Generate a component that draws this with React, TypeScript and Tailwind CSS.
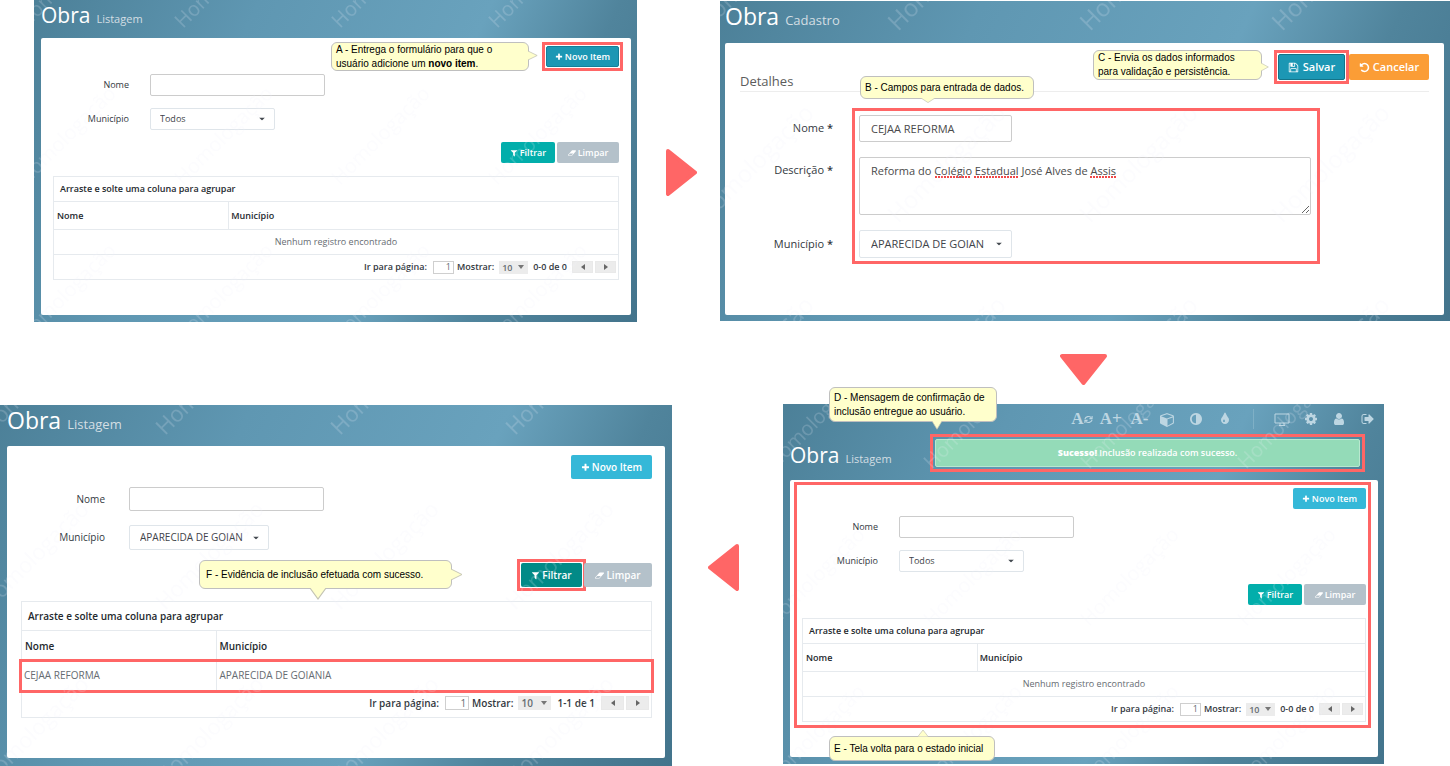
import { useState, type ReactNode } from "react";

const ICONS = {
  plus: "M1600 736v192q0 40-28 68t-68 28h-416v416q0 40-28 68t-68 28h-192q-40 0-68-28t-28-68v-416h-416q-40 0-68-28t-28-68v-192q0-40 28-68t68-28h416v-416q0-40 28-68t68-28h192q40 0 68 28t28 68v416h416q40 0 68 28t28 68z",
  filter:
    "M1595 295q17 41-14 70l-493 493v742q0 42-39 59-13 5-25 5-27 0-45-19l-256-256q-19-19-19-45v-486l-493-493q-31-29-14-70 17-39 59-39h1280q42 0 59 39z",
  eraser:
    "M832 1408l336-384h-768l-336 384h768zm1013-1077q15 34 9.5 71.5t-30.5 65.5l-896 1024q-38 44-96 44h-768q-38 0-69.5-20.5t-47.5-54.5q-15-34-9.5-71.5t30.5-65.5l896-1024q38-44 96-44h768q38 0 69.5 20.5t47.5 54.5z",
  save: "M512 1536h768v-384h-768v384zm896 0h128v-896q0-14-10-38.5t-20-34.5l-281-281q-10-10-34-20t-39-10v416q0 40-28 68t-68 28h-576q-40 0-68-28t-28-68v-416h-128v1280h128v-416q0-40 28-68t68-28h832q40 0 68 28t28 68v416zm-384-928v-320q0-13-9.5-22.5t-22.5-9.5h-192q-13 0-22.5 9.5t-9.5 22.5v320q0 13 9.5 22.5t22.5 9.5h192q13 0 22.5-9.5t9.5-22.5zm640 32v928q0 40-28 68t-68 28h-1344q-40 0-68-28t-28-68v-1344q0-40 28-68t68-28h928q40 0 88 20t76 48l280 280q28 28 48 76t20 88z",
  undo: "M1664 896q0 156-61 298t-164 245-245 164-298 61q-172 0-327-72.5t-264-204.5q-7-10-6.5-22.5t8.5-20.5l137-138q10-9 25-9 16 2 23 12 73 95 179 147t225 52q104 0 198.5-40.5t163.5-109.5 109.5-163.5 40.5-198.5-40.5-198.5-109.5-163.5-163.5-109.5-198.5-40.5q-98 0-188 35.5t-160 101.5l137 138q31 30 14 69-17 40-59 40h-448q-26 0-45-19t-19-45v-448q0-42 40-59 39-17 69 14l130 129q107-101 244.5-156.5t284.5-55.5q156 0 298 61t245 164 164 245 61 298z",
  cube: "M896 1629l640-349v-636l-640 233v752zm-64-865l698-254-698-254-698 254zm832-252v768q0 35-18 65t-49 47l-704 384q-28 16-61 16t-61-16l-704-384q-31-17-49-47t-18-65v-768q0-40 23-73t61-47l704-256q22-8 44-8t44 8l704 256q38 14 61 47t23 73z",
  adjust:
    "M896 1440v-1088q-148 0-273 73t-198 198-73 273 73 273 198 198 273 73zm768-544q0 209-103 385.5t-279.5 279.5-385.5 103-385.5-103-279.5-279.5-103-385.5 103-385.5 279.5-279.5 385.5-103 385.5 103 279.5 279.5 103 385.5z",
  tint: "M896 1152q0-36-20-69-1-1-15.5-22.5t-25.5-38-25-44-21-50.5q-4-16-21-16t-21 16q-7 23-21 50.5t-25 44-25.5 38-15.5 22.5q-20 33-20 69 0 53 37.5 90.5t90.5 37.5 90.5-37.5 37.5-90.5zm512-128q0 212-150 362t-362 150-362-150-150-362q0-145 81-275 6-9 62.5-90.5t101-151 99.5-178 83-201.5q9-30 34-47t51-17 51.5 17 33.5 47q28 93 83 201.5t99.5 178 101 151 62.5 90.5q81 127 81 275z",
  cog: "M1152 896q0-106-75-181t-181-75-181 75-75 181 75 181 181 75 181-75 75-181zm512-109v222q0 12-8 23t-20 13l-185 28q-19 54-39 91 35 50 107 138 10 12 10 25t-9 23q-27 37-99 108t-94 71q-12 0-26-9l-138-108q-44 23-91 38-16 136-29 186-7 28-36 28h-222q-14 0-24.5-8.5t-11.5-21.5l-28-184q-49-16-90-37l-141 107q-10 9-25 9-14 0-25-11-126-114-165-168-7-10-7-23 0-12 8-23 15-21 51-66.5t54-70.5q-27-50-41-99l-183-27q-13-2-21-12.5t-8-23.5v-222q0-12 8-23t19-13l186-28q14-46 39-92-40-57-107-138-10-12-10-24 0-10 9-23 26-36 98.5-107.5t94.5-71.5q13 0 26 10l138 107q44-23 91-38 16-136 29-186 7-28 36-28h222q14 0 24.5 8.5t11.5 21.5l28 184q49 16 90 37l142-107q9-9 24-9 13 0 25 10 129 119 165 170 7 8 7 22 0 12-8 23-15 21-51 66.5t-54 70.5q26 50 41 98l183 28q13 2 21 12.5t8 23.5z",
  user: "M1536 1399q0 109-62.5 187t-150.5 78h-854q-88 0-150.5-78t-62.5-187q0-85 8.5-160.5t31.5-152 58.5-131 94-89 134.5-34.5q131 128 313 128t313-128q76 0 134.5 34.5t94 89 58.5 131 31.5 152 8.5 160.5zm-256-887q0 159-112.5 271.5t-271.5 112.5-271.5-112.5-112.5-271.5 112.5-271.5 271.5-112.5 271.5 112.5 112.5 271.5z",
  signOut:
    "M704 1440q0 4 1 20t.5 26.5-3 23.5-10 19.5-20.5 6.5h-320q-119 0-203.5-84.5t-84.5-203.5v-704q0-119 84.5-203.5t203.5-84.5h320q13 0 22.5 9.5t9.5 22.5q0 4 1 20t.5 26.5-3 23.5-10 19.5-20.5 6.5h-320q-66 0-113 47t-47 113v704q0 66 47 113t113 47h312l11.5 1 11.5 3 8 5.5 7 9 2 13.5zm928-544q0 26-19 45l-544 544q-19 19-45 19t-45-19-19-45v-288h-448q-26 0-45-19t-19-45v-384q0-26 19-45t45-19h448v-288q0-26 19-45t45-19 45 19l544 544q19 19 19 45z",
};

function Icon({ name, className }: { name: keyof typeof ICONS; className: string }) {
  return (
    <svg viewBox={name === "eraser" ? "-64 0 1920 1792" : "0 0 1792 1792"} className={className} fill="currentColor" aria-hidden="true">
      <path d={ICONS[name]} />
    </svg>
  );
}

/* Diagonal stamp that the test environment lays over every screen. */
function Watermark({ id, tile, x, y, size }: { id: string; tile: number; x: number; y: number; size: number }) {
  return (
    <svg className="pointer-events-none absolute inset-0 size-full" aria-hidden="true">
      <defs>
        <pattern id={id} patternUnits="userSpaceOnUse" x={x - 30} y={y - tile + 10} width={tile} height={tile}>
          <text
            transform={`translate(30 ${tile - 10}) rotate(-45)`}
            fontSize={size}
            fontFamily="Open Sans, sans-serif"
            fill="#edeef5"
            fillOpacity="0.19"
          >
            Homologação
          </text>
        </pattern>
      </defs>
      <rect width="100%" height="100%" fill={`url(#${id})`} />
    </svg>
  );
}

function Screen({ children, className = "" }: { children: ReactNode; className?: string }) {
  return (
    <section
      className={`relative flex flex-col bg-[linear-gradient(115deg,#4c8098_0%,#5f97b2_30%,#69a2bd_61%,#50849c_78%,#43748c_100%)] font-['Open_Sans',sans-serif] ${className}`}
    >
      {children}
    </section>
  );
}

function Pointer({ dir, className }: { dir: "right" | "down" | "up"; className: string }) {
  const d = { right: "M0 0L11 6L0 12", down: "M0 0L7 11L14 0", up: "M0 11L6 0L12 11" }[dir];
  const box = { right: "0 0 12 12", down: "0 0 14 12", up: "0 0 12 12" }[dir];
  return (
    <svg viewBox={box} preserveAspectRatio="none" className={`absolute ${className}`} aria-hidden="true">
      <path d={d} fill="#ffffcc" stroke="#c4c4b4" />
    </svg>
  );
}

function Callout({ children, className }: { children: ReactNode; className: string }) {
  return (
    <div
      className={`absolute z-10 flex items-center rounded-md border border-[#bfbfbf] bg-[#ffffcc] pl-1 font-['Liberation_Sans',sans-serif] text-[10px] leading-[14px] whitespace-nowrap text-black ${className}`}
    >
      {children}
    </div>
  );
}

/* Square frame drawn round a control without moving its neighbours. */
function Framed({ on = true, children }: { on?: boolean; children: ReactNode }) {
  return <span className={on ? "-m-1 flex border-3 border-[#ff6666] p-px" : "flex"}>{children}</span>;
}

function SelectBox({
  id,
  options,
  className,
  text,
}: {
  id: string;
  options: string[];
  className: string;
  text: string;
}) {
  return (
    <span className={`relative block ${className}`}>
      <select
        id={id}
        className={`size-full appearance-none overflow-hidden rounded-[2px] border border-[#dfe5ea] bg-white text-[#3f444a] ${text}`}
      >
        {options.map((o) => (
          <option key={o}>{o}</option>
        ))}
      </select>
      <svg viewBox="0 0 6 3" className="pointer-events-none absolute top-1/2 right-2.5 h-[3px] w-1.5 -translate-y-1/2" aria-hidden="true">
        <path d="M0 0h6L3 3z" fill="#444a50" />
      </svg>
    </span>
  );
}

const SIZES = {
  sm: {
    text: "text-[9px]",
    panel: "px-3 pt-2 pb-[35px]",
    actions: "h-[21px]",
    button: "h-[21px] text-[9px]",
    novo: "w-[73px]",
    filtrar: "w-[54px]",
    limpar: "w-[62px]",
    icon: "size-2",
    fields: "mt-[7px] gap-3",
    label: "w-[76px]",
    input: "h-[22px] w-[175px]",
    select: "h-[22px] w-[125px]",
    selectText: "pl-[9px] text-[9px]",
    gap: "gap-[21px]",
    buttons: "mt-3 mb-[13px]",
    group: "h-6 pl-1.5",
    head: "h-[28px]",
    row: "h-[25px]",
    pager: "h-6",
    pageInput: "h-[13px] w-[21px] mr-[3px] ml-[6px]",
    pageSelect: "h-[13px] w-[29px]",
    range: "mx-[5px]",
    pageButton: "h-[12px] w-[21px]",
  },
  lg: {
    text: "text-[10px]",
    panel: "pl-3.5 pr-[13px] pt-[9px] pb-10",
    actions: "h-6",
    button: "h-6 text-[10px]",
    novo: "w-[81px]",
    filtrar: "w-[61px]",
    limpar: "w-[68px]",
    icon: "size-[9px]",
    fields: "mt-2 gap-3.5",
    label: "w-[84px]",
    input: "h-6 w-[195px]",
    select: "h-[25px] w-[140px]",
    selectText: "pl-2.5 text-[10px]",
    gap: "gap-6",
    buttons: "mt-[13px] mb-[14px]",
    group: "h-[28px] pl-1.5",
    head: "h-[31px]",
    row: "h-[28px]",
    pager: "h-[27px]",
    pageInput: "h-[14px] w-6 mr-[3px] ml-[6px]",
    pageSelect: "h-[14px] w-[33px]",
    range: "mx-1.5",
    pageButton: "h-[14px] w-[23px]",
  },
};

type ListProps = {
  id: string;
  size: keyof typeof SIZES;
  city: string;
  rows: [string, string][];
  range: string;
  active?: "novo" | "filtrar";
};

function ListPanel({ id, size, city, rows, range, active }: ListProps) {
  const s = SIZES[size];
  const btn = `flex items-center justify-center gap-0.5 rounded-[2px] font-semibold text-white ${s.button}`;
  return (
    <div className={`rounded-[2px] bg-white ${s.panel} ${s.text} text-[#32383e]`}>
      <div className={`flex justify-end ${s.actions}`}>
        <Framed on={active === "novo"}>
          <button
            type="button"
            className={`${btn} ${s.novo} ${active === "novo" ? "border border-[#147f99] bg-[#1c97b4]" : "bg-[#35b8d8]"}`}
          >
            <Icon name="plus" className={s.icon} />
            Novo Item
          </button>
        </Framed>
      </div>
      <form onSubmit={(e) => e.preventDefault()}>
        <div className={`flex flex-col ${s.fields}`}>
          <div className={`flex items-center ${s.gap}`}>
            <label htmlFor={`${id}-nome`} className={`text-right ${s.label}`}>
              Nome
            </label>
            <input id={`${id}-nome`} className={`rounded-[2px] border border-[#cccccc] bg-white px-2 ${s.input}`} />
          </div>
          <div className={`flex items-center ${s.gap}`}>
            <label htmlFor={`${id}-municipio`} className={`text-right ${s.label}`}>
              Município
            </label>
            <SelectBox id={`${id}-municipio`} options={[city]} className={s.select} text={s.selectText} />
          </div>
        </div>
        <div className={`flex justify-end gap-0.5 ${s.buttons}`}>
          <Framed on={active === "filtrar"}>
            <button type="submit" className={`${btn} ${s.filtrar} ${active === "filtrar" ? "bg-[#028a87]" : "bg-[#02aeab]"}`}>
              <Icon name="filter" className={s.icon} />
              Filtrar
            </button>
          </Framed>
          <button type="reset" className={`${btn} ${s.limpar} bg-[#b4c1ca]`}>
            <Icon name="eraser" className={s.icon} />
            Limpar
          </button>
        </div>
      </form>
      <div className="border border-[#e6eaee]">
        <div className={`flex items-center font-semibold text-[#24292e] ${s.group}`}>Arraste e solte uma coluna para agrupar</div>
        <table className="w-full table-fixed border-collapse">
          <thead>
            <tr className={`border-y border-[#e6eaee] text-left text-[#24292e] ${s.head}`}>
              <th className="w-[31%] border-r border-[#e6eaee] px-[3px] font-semibold">Nome</th>
              <th className="px-[2px] font-semibold">Município</th>
            </tr>
          </thead>
          <tbody>
            {rows.length === 0 && (
              <tr className={`border-b border-[#e6eaee] ${s.row}`}>
                <td colSpan={2} className="text-center text-[#666c72]">
                  Nenhum registro encontrado
                </td>
              </tr>
            )}
            {rows.map(([nome, municipio]) => (
              <tr key={nome} className={`text-[#666c72] outline-3 outline-[#ff6666] ${s.row}`}>
                <td className="border-r border-[#e6eaee] px-[2px]">{nome}</td>
                <td className="px-[2px]">{municipio}</td>
              </tr>
            ))}
          </tbody>
        </table>
        <div className={`flex items-center justify-end pr-0.5 font-semibold text-[#32383e] ${s.pager}`}>
          <label htmlFor={`${id}-pagina`}>Ir para página:</label>
          <input
            id={`${id}-pagina`}
            defaultValue="1"
            className={`border border-[#cfcfcf] bg-white pr-0.5 text-right font-normal text-[#666c72] ${s.pageInput}`}
          />
          <label htmlFor={`${id}-mostrar`}>Mostrar:</label>
          <span className={`relative ml-[5px] ${s.pageSelect}`}>
            <select id={`${id}-mostrar`} className="block size-full appearance-none bg-[#ececec] pl-[3px] text-[#666c72]">
              <option>10</option>
            </select>
            <svg viewBox="0 0 6 4" className="pointer-events-none absolute top-1/2 right-1 h-1 w-1.5 -translate-y-1/2" aria-hidden="true">
              <path d="M0 0h6L3 4z" fill="#777" />
            </svg>
          </span>
          <span className={s.range}>{range}</span>
          <button type="button" aria-label="Anterior" className={`flex items-center justify-center border border-[#e9e9e9] bg-[#ececec] ${s.pageButton}`}>
            <svg viewBox="0 0 4 6" className="h-1.5 w-1" aria-hidden="true">
              <path d="M4 0v6L0 3z" fill="#666" />
            </svg>
          </button>
          <button type="button" aria-label="Próxima" className={`ml-0.5 flex items-center justify-center border border-[#e9e9e9] bg-[#ececec] ${s.pageButton}`}>
            <svg viewBox="0 0 4 6" className="h-1.5 w-1" aria-hidden="true">
              <path d="M0 0v6L4 3z" fill="#666" />
            </svg>
          </button>
        </div>
      </div>
    </div>
  );
}

function FlowArrow({ dir, className = "" }: { dir: "right" | "down" | "left"; className?: string }) {
  const path = {
    right: "M2 2L29 23.500L2 45z",
    left: "M29 2L2 23.500L29 45z",
    down: "M2 2H45L23.500 29z",
  }[dir];
  return (
    <svg
      viewBox={dir === "down" ? "0 0 47 31" : "0 0 31 47"}
      className={`${dir === "down" ? "h-[31px] w-[47px]" : "h-[47px] w-[31px]"} ${className}`}
      aria-hidden="true"
    >
      <path d={path} fill="#ff6666" stroke="#ff6666" strokeWidth="4" strokeLinejoin="round" />
    </svg>
  );
}

function Title({ sub, className, subClass }: { sub: string; className: string; subClass: string }) {
  return (
    <h1 className={`flex items-baseline gap-1.5 font-normal text-white ${className}`}>
      Obra <small className={`font-medium text-[#d3dee3] ${subClass}`}>{sub}</small>
    </h1>
  );
}

function FormPanel() {
  const [nome, setNome] = useState("CEJAA REFORMA");
  const label = "w-[93px] shrink-0 text-right";
  const star = <span className="font-semibold">*</span>;
  return (
    <form onSubmit={(e) => e.preventDefault()} className="rounded-[2px] bg-white px-[15px] pt-[11px] pb-[57px] text-[11px] text-[#32383e]">
      <div className="flex h-[38px] items-start justify-between border-b border-[#ededed]">
        <h2 className="pt-[18px] text-[13px] leading-[18px] text-[#5c5c5c]">Detalhes</h2>
        <div className="flex gap-1">
          <Framed>
            <button
              type="submit"
              className="flex h-[26px] w-[67px] items-center justify-center gap-1 rounded-[2px] border border-[#147489] bg-[#1c97b4] font-semibold text-white"
            >
              <Icon name="save" className="size-[11px]" />
              Salvar
            </button>
          </Framed>
          <button type="button" className="flex h-[26px] w-[80px] items-center justify-center gap-[3px] rounded-[2px] bg-[#fb9d36] font-semibold text-white">
            <Icon name="undo" className="size-[11px]" />
            Cancelar
          </button>
        </div>
      </div>
      <div className="mt-[23px] flex flex-col gap-[15px]">
        <div className="flex items-center gap-[26px]">
          <label htmlFor="cad-nome" className={label}>
            Nome {star}
          </label>
          <input
            id="cad-nome"
            value={nome}
            onChange={(e) => setNome(e.target.value)}
            className="h-[27px] w-[153px] rounded-[2px] border border-[#cccccc] bg-white px-[11px] text-[#4a4a4a]"
          />
        </div>
        <div className="flex items-start gap-[26px]">
          <label htmlFor="cad-descricao" className={`pt-[5px] ${label}`}>
            Descrição {star}
          </label>
          <div className="relative mr-[118px] flex-1">
            <textarea
              id="cad-descricao"
              spellCheck={false}
              defaultValue="Reforma do Colégio Estadual José Alves de Assis"
              className="block h-[58px] w-full rounded-[2px] border border-[#cccccc] bg-white px-[11px] pt-[5px] leading-[16px] text-[#4a4a4a]"
            />
            <svg viewBox="0 0 270 24" className="pointer-events-none absolute top-0 left-0 h-6 w-[270px]" aria-hidden="true">
              <path d="M76 20H111M115 20H160M231 20H258" stroke="#f04848" strokeWidth="2" strokeDasharray="2 1" />
            </svg>
          </div>
        </div>
        <div className="flex items-center gap-[26px]">
          <label htmlFor="cad-municipio" className={label}>
            Município {star}
          </label>
          <SelectBox id="cad-municipio" options={["APARECIDA DE GOIAN"]} className="h-[28px] w-[153px]" text="pl-[11px] text-[11px]" />
        </div>
      </div>
    </form>
  );
}

function Toolbar() {
  const item = "flex h-full flex-1 items-center justify-center font-['Liberation_Serif',serif] text-[17px] font-bold";
  return (
    <nav aria-label="Acessibilidade" className="-mr-1 ml-auto flex h-[30px] w-[314px] text-[#bdd6e2]">
      <button type="button" aria-label="Fonte padrão" className={`${item} gap-px`}>
        A
        <svg viewBox="0 0 10 10" className="size-[9px]" fill="none" stroke="currentColor" strokeWidth="1.200" aria-hidden="true">
          <path d="M1 4.500A4 3.500 0 0 1 8 3M9 5.500A4 3.500 0 0 1 2 7M9 1v3H6M1 9V6h3" />
        </svg>
      </button>
      <button type="button" className={item}>A+</button>
      <button type="button" className={item}>A-</button>
      <button type="button" aria-label="Tema" className={item}><Icon name="cube" className="size-[15px]" /></button>
      <button type="button" aria-label="Contraste" className={item}><Icon name="adjust" className="size-[14px]" /></button>
      <button type="button" aria-label="Cor" className={item}><Icon name="tint" className="size-[14px]" /></button>
      <span className={item}><span className="h-5 w-px bg-[#7fb0c6]" /></span>
      <button type="button" aria-label="Tela" className={item}>
        <svg viewBox="0 0 16 13" className="h-[13px] w-4" fill="none" stroke="currentColor" aria-hidden="true">
          <path d="M1 1h14v9H1zM5 12.500h6M6 10v2M10 10v2" />
        </svg>
      </button>
      <button type="button" aria-label="Configurações" className={item}><Icon name="cog" className="size-[14px]" /></button>
      <button type="button" aria-label="Usuário" className={item}><Icon name="user" className="size-[14px]" /></button>
      <button type="button" aria-label="Sair" className={item}><Icon name="signOut" className="size-[14px]" /></button>
    </nav>
  );
}

export default function App() {
  return (
    <main className="overflow-x-clip bg-white">
      <div className="grid grid-cols-[34fr_603fr_83fr_730fr] items-start">
        <Screen className="col-start-2 pr-[6px] pb-[7px] pl-[7px]">
          <Title sub="Listagem" className="h-[38px] text-[21px] leading-[30px]" subClass="text-[11px]" />
          <ListPanel id="lista-a" size="sm" city="Todos" rows={[]} range="0-0 de 0" active="novo" />
          <Watermark id="wm-a" tile={157} x={149} y={29} size={20} />
          <Callout className="top-[42px] right-[108px] h-[29px] w-[198px]">
            <p>
              A - Entrega o formulário para que o
              <br />
              usuário adicione um <b>novo item</b>.
            </p>
            <Pointer dir="right" className="top-2 -right-2.5 h-[9px] w-2.5" />
          </Callout>
        </Screen>
        <FlowArrow dir="right" className="mt-[149px] ml-[29px]" />
        <Screen className="mt-px pr-[6px] pb-[6px] pl-[5px]">
          <Title sub="Cadastro" className="h-[42px] text-[23px] leading-[30px]" subClass="text-[13px]" />
          <FormPanel />
          <Watermark id="wm-b" tile={192} x={178} y={31} size={24} />
          <span className="pointer-events-none absolute top-[107px] right-[130px] left-[132px] h-[156px] border-3 border-[#ff6666]" />
          <Callout className="top-[75px] left-[140px] h-[23px] w-[174px]">
            B - Campos para entrada de dados.
            <Pointer dir="down" className="-bottom-[5px] left-[60px] h-[5px] w-3.5" />
          </Callout>
          <Callout className="top-[49px] right-[188px] h-[30px] w-[169px]">
            <p>
              C - Envia os dados informados
              <br />
              para validação e persistência.
            </p>
            <Pointer dir="right" className="top-3 -right-2 h-2 w-2" />
          </Callout>
        </Screen>
      </div>

      <div className="grid grid-cols-[716fr_734fr] pt-8 pb-[19px]">
        <FlowArrow dir="down" className="col-start-2 justify-self-center" />
      </div>

      <div className="grid grid-cols-[672fr_111fr_601fr_66fr] items-start">
        <Screen className="mt-px px-[7px] pb-2">
          <Title sub="Listagem" className="h-[41px] text-[23px] leading-[30px]" subClass="text-[13px]" />
          <ListPanel
            id="lista-f"
            size="lg"
            city="APARECIDA DE GOIAN"
            rows={[["CEJAA REFORMA", "APARECIDA DE GOIANIA"]]}
            range="1-1 de 1"
            active="filtrar"
          />
          <Watermark id="wm-f" tile={175} x={165} y={31} size={22} />
          <Callout className="top-[155px] left-[199px] h-[29px] w-[253px] pl-1.5">
            F - Evidência de inclusão efetuada com sucesso.
            <Pointer dir="right" className="top-2 -right-3 h-[11px] w-3" />
            <Pointer dir="down" className="-bottom-3 left-[110px] h-3 w-4" />
          </Callout>
        </Screen>
        <FlowArrow dir="left" className="mt-[140px] ml-9" />
        <Screen className="pr-[6px] pb-[7px] pl-[7px]">
          <Toolbar />
          <div className="flex h-[46px] items-start">
            <Title sub="Listagem" className="w-[140px] pt-1.5 text-[21px] leading-[30px]" subClass="text-[11px]" />
            <div className="mr-[13px] h-[38px] flex-1 border-3 border-[#ff6666] p-0.5">
              <div
                role="status"
                className="flex h-7 items-center justify-center rounded-[2px] border border-[#b9e8cf] bg-[#94dbb8] text-[9px] font-semibold text-white"
              >
                <p>
                  <b className="font-extrabold">Sucesso!</b> Inclusão realizada com sucesso.
                </p>
              </div>
            </div>
          </div>
          <ListPanel id="lista-d" size="sm" city="Todos" rows={[]} range="0-0 de 0" />
          <Watermark id="wm-d" tile={157} x={149} y={66} size={20} />
          <span className="pointer-events-none absolute top-[78px] right-[13px] bottom-9 left-[11px] border-3 border-[#ff6666]" />
          <Callout className="-top-[17px] left-[46px] h-[35px] w-[168px]">
            <p>
              D - Mensagem de confirmação de
              <br />
              inclusão entregue ao usuário.
            </p>
            <Pointer dir="down" className="-bottom-[9px] left-[102px] h-[9px] w-2.5" />
          </Callout>
          <Callout className="bottom-[3px] left-[46px] h-[25px] w-[166px]">
            E - Tela volta para o estado inicial
            <Pointer dir="up" className="-top-[7px] left-[88px] h-[7px] w-2.5" />
          </Callout>
        </Screen>
      </div>
    </main>
  );
}
